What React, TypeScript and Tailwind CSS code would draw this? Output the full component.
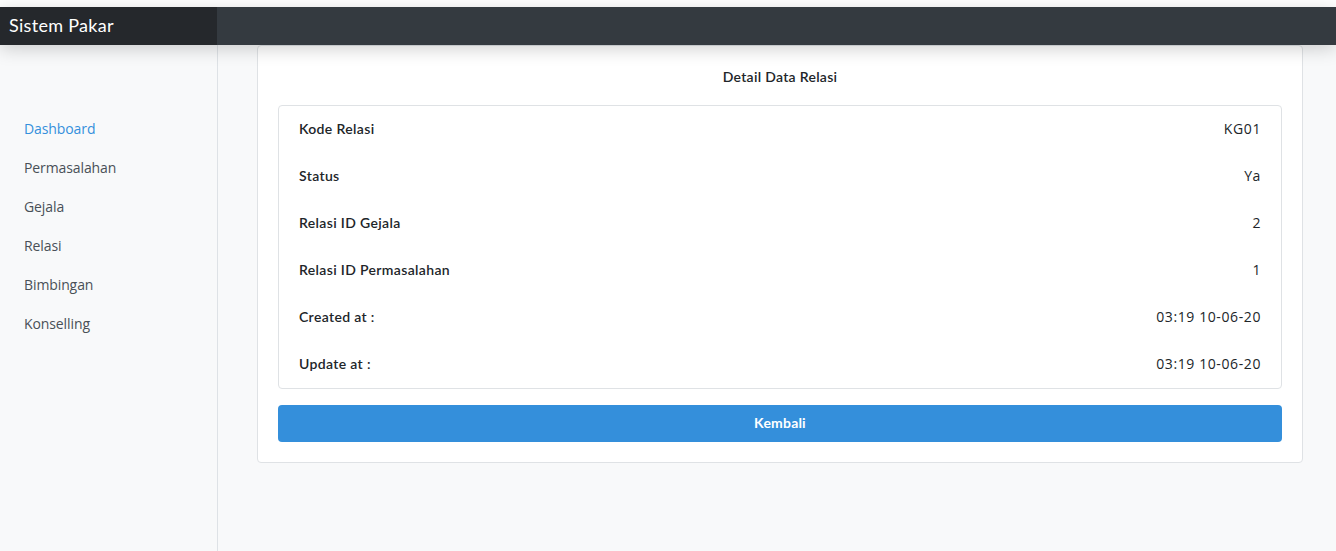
import React from 'react';

const menu = ['Dashboard', 'Permasalahan', 'Gejala', 'Relasi', 'Bimbingan', 'Konselling'];

const rows = [
  { label: 'Kode Relasi', value: 'KG01' },
  { label: 'Status', value: 'Ya' },
  { label: 'Relasi ID Gejala', value: '2' },
  { label: 'Relasi ID Permasalahan', value: '1' },
  { label: 'Created at :', value: '03:19 10-06-20' },
  { label: 'Update at :', value: '03:19 10-06-20' },
];

const App: React.FC = () => {
  return (
    <div className="min-h-[551px] bg-[#f8f9fa] flex flex-col font-['Nunito','Lato',sans-serif] text-[#212529]">
      {/* top strip */}
      <div className="h-[7px] bg-white" />

      {/* Navbar */}
      <div className="relative z-10 flex h-[38px] bg-[#343a40] shadow-[0_4px_18px_rgba(0,0,0,0.18)]">
        <div className="w-[217px] bg-[#25282c] flex items-center pl-[9px] pb-[2px]">
          <span className="text-white text-[18px] leading-none tracking-[0.3px] font-['Lato',sans-serif]">Sistem Pakar</span>
        </div>
      </div>

      <div className="flex flex-1">
        {/* Sidebar */}
        <div className="w-[218px] border-r border-[#dee2e6] pt-[64px] flex flex-col">
          {menu.map((item, i) => (
            <a
              key={item}
              className={`pl-6 py-[9px] text-[14px] leading-[21px] tracking-[-0.1px] font-['Open_Sans',sans-serif] ${i === 0 ? 'text-[#3490dc]' : 'text-[#495057]'}`}
            >
              {item}
            </a>
          ))}
        </div>

        {/* Main */}
        <div className="flex-1 pl-[39px] pr-[33px]">
          <div className="bg-white border border-[#dfe2e5] rounded-[4px] p-5">
            <div className="text-center text-[14px] leading-[22px] font-semibold tracking-[0.3px] font-['Lato',sans-serif] mb-[17px]">
              Detail Data Relasi
            </div>

            <div className="border border-[#dfe2e5] rounded-[4px]">
              {rows.map(r => (
                <div key={r.label} className="h-[47px] pb-[2px] flex items-center justify-between px-5">
                  <span className="text-[14px] font-semibold tracking-[0.35px] font-['Lato',sans-serif]">{r.label}</span>
                  <span className="text-[14px] tracking-[0.6px] font-['Open_Sans',sans-serif] text-[#212529]">{r.value}</span>
                </div>
              ))}
            </div>

            <button className="mt-4 w-full h-[37px] pb-[2px] bg-[#348fdb] rounded-[4px] text-white text-[14px] font-bold tracking-[0.2px] font-['Lato',sans-serif]">
              Kembali
            </button>
          </div>
        </div>
      </div>
    </div>
  );
};

export default App;
